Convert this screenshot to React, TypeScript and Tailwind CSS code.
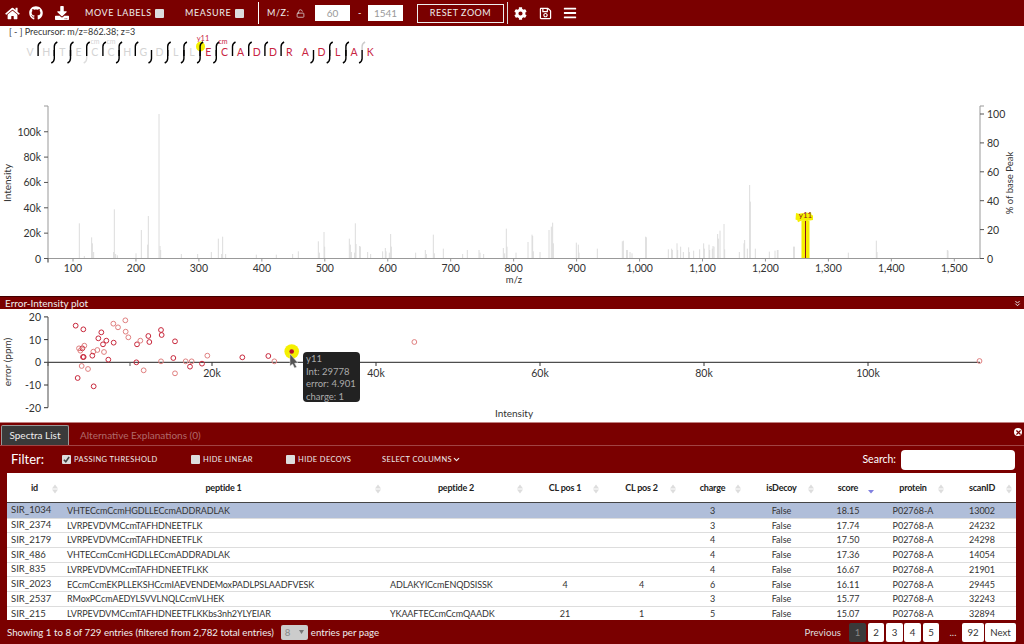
import { ChevronDown, ChevronsDown, LockOpen, X } from "lucide-react"
import { FaBars, FaCog, FaDownload, FaGithub, FaHome, FaRegSave } from "react-icons/fa"

// peak [x, top] pairs, in 1/3 px
const peaksLeft = [
  [238, 370], [253, 468], [275, 412], [277, 430], [281, 456], [341, 456], [343, 328], [347, 462], [352, 466], [408, 460],
  [424, 390], [443, 434], [445, 348], [477, 42], [480, 438], [482, 450], [544, 462], [593, 462], [634, 456], [655, 416],
  [665, 462], [668, 410], [677, 462], [769, 464], [829, 464], [878, 462], [895, 454], [955, 424], [958, 458], [972, 396],
  [974, 440], [1048, 416], [1051, 434], [1054, 456], [1064, 458], [1066, 370], [1068, 432], [1079, 438], [1081, 440],
  [1103, 456], [1112, 462], [1148, 454], [1156, 444], [1158, 454], [1168, 458], [1172, 402], [1174, 440], [1247, 458],
  [1276, 450], [1279, 462], [1300, 404], [1303, 460], [1330, 446], [1388, 462], [1402, 450], [1437, 450], [1440, 458],
  [1451, 462], [1510, 444], [1514, 460], [1519, 386], [1521, 440],
]

const peaksRight = [
  [12, 458], [48, 426], [60, 404], [62, 408], [64, 454], [84, 456], [111, 390], [118, 380], [122, 368], [124, 430],
  [193, 428], [199, 434], [201, 458], [256, 446], [331, 424], [334, 422], [344, 450], [346, 450], [354, 456], [360, 460],
  [401, 410], [403, 412], [469, 448], [479, 446], [481, 450], [495, 430], [497, 450], [506, 440], [514, 456], [530, 442],
  [532, 456], [545, 452], [563, 448], [575, 430], [577, 446], [591, 434], [593, 450], [601, 446], [603, 438], [606, 440],
  [617, 402], [619, 416], [624, 392], [636, 372], [638, 448], [682, 456], [696, 430], [698, 420], [706, 446], [713, 255],
  [715, 305], [730, 446], [772, 455], [789, 452], [796, 450], [798, 450], [845, 440], [847, 440], [1009, 458], [1093, 422],
  [1095, 456], [1306, 450], [1308, 452],
]

const peaks = [
  ...peaksLeft.map(([x, top]) => [x / 3, 100 + top / 3]),
  ...peaksRight.map(([x, top]) => [512 + x / 3, 100 + top / 3]),
]

const mzTicks = [100, 200, 300, 400, 500, 600, 700, 800, 900, 1000, 1100, 1200, 1300, 1400, 1500]
const intensityTicks = [0, 20, 40, 60, 80, 100]

const sequence = "VHTECCHGDLLECADDRADLAK".split("")
type Frag = "top" | "bottom" | "both" | "none" | "lightBottom" | "lightTop"
const fragments: Frag[] = [
  "top", "both", "both", "lightBottom", "top", "both", "top", "bottom", "both", "both", "both",
  "both", "top", "top", "top", "top", "none", "bottom", "both", "both", "lightTop",
]

// scatter [x, y, faded]
const errorPoints: [number, number, boolean][] = [
  [227, 107, false], [250, 118, false], [237, 175, true], [247, 175, false], [241, 182, true], [253, 167, true],
  [249, 201, false], [251, 201, false], [280, 185, true], [277, 197, false], [292, 180, true], [295, 145, false],
  [304, 127, false], [319, 152, false], [309, 163, false], [312, 186, true], [340, 101, true], [354, 112, true],
  [376, 91, true], [377, 125, true], [385, 142, true], [341, 158, false], [325, 209, false], [411, 163, false],
  [421, 152, true], [445, 138, false], [448, 156, false], [483, 120, false], [485, 135, false], [525, 154, false],
  [409, 217, false], [483, 214, true], [520, 204, false], [557, 214, true], [575, 214, true], [606, 221, false],
  [622, 197, true], [727, 202, false], [805, 198, false], [823, 214, true], [1243, 156, true], [245, 228, true],
  [264, 237, true], [233, 264, false], [281, 289, false], [431, 241, true], [525, 250, true], [570, 230, false],
]

const rows = [
  ["SIR_1034", "VHTECcmCcmHGDLLECcmADDRADLAK", "", "", "", "3", "False", "18.15", "P02768-A", "13002"],
  ["SIR_2374", "LVRPEVDVMCcmTAFHDNEETFLK", "", "", "", "3", "False", "17.74", "P02768-A", "24232"],
  ["SIR_2179", "LVRPEVDVMCcmTAFHDNEETFLK", "", "", "", "4", "False", "17.50", "P02768-A", "24298"],
  ["SIR_486", "VHTECcmCcmHGDLLECcmADDRADLAK", "", "", "", "4", "False", "17.36", "P02768-A", "14054"],
  ["SIR_835", "LVRPEVDVMCcmTAFHDNEETFLKK", "", "", "", "4", "False", "16.67", "P02768-A", "21901"],
  ["SIR_2023", "ECcmCcmEKPLLEKSHCcmIAEVENDEMoxPADLPSLAADFVESK", "ADLAKYICcmENQDSISSK", "4", "4", "6", "False", "16.11", "P02768-A", "29445"],
  ["SIR_2537", "RMoxPCcmAEDYLSVVLNQLCcmVLHEK", "", "", "", "3", "False", "15.77", "P02768-A", "32243"],
  ["SIR_215", "LVRPEVDVMCcmTAFHDNEETFLKKbs3nh2YLYEIAR", "YKAAFTECcmCcmQAADK", "21", "1", "5", "False", "15.07", "P02768-A", "32894"],
]

const columns = ["id", "peptide 1", "peptide 2", "CL pos 1", "CL pos 2", "charge", "isDecoy", "score", "protein", "scanID"]
const gridColumns = "grid grid-cols-[55px_323px_142px_76px_77px_65px_73px_60px_70px_68px]"

function CheckBox({ checked = false }: { checked?: boolean }) {
  return (
    <span className="flex h-[9px] w-[9px] shrink-0 items-center justify-center rounded-[1px] bg-[#ddd]">
      {checked && (
        <svg width="7" height="7" viewBox="0 0 8 8" fill="none" stroke="#444" strokeWidth="1.8">
          <path d="M1 4.2 3.2 6.5 7 1.2" />
        </svg>
      )}
    </span>
  )
}

function SortIcon({ active }: { active: boolean }) {
  return (
    <svg className="absolute right-1 top-[11px]" width="6" height="10" viewBox="0 0 6 10">
      {active ? (
        <path d="M0 6h6L3 9.5z" fill="#8080e0" />
      ) : (
        <path d="M3 .5 6 4.5H0zM3 9.5 0 5.5h6z" fill="#ddd" />
      )}
    </svg>
  )
}

function Fragment({ x, kind }: { x: number; kind: Frag }) {
  const top = `M${x + 3} 42 Q${x} 43.5 ${x} 46.500 L${x} 56`
  const bottom = `M${x} 50 L${x} 58.500 Q${x} 61.500 ${x - 3} 63`
  return (
    <g fill="none" stroke="#000" strokeWidth="1.4">
      {(kind === "top" || kind === "both") && <path d={top} />}
      {(kind === "bottom" || kind === "both") && <path d={bottom} />}
      {kind === "lightBottom" && (
        <>
          <path d={top} />
          <path d={`M${x} 56 L${x} 58.500 Q${x} 61.500 ${x - 3} 63`} stroke="#ddd" />
        </>
      )}
      {kind === "lightTop" && (
        <>
          <path d={bottom} />
          <path d={`M${x + 3} 42 Q${x} 43.500 ${x} 46.500 L${x} 50`} stroke="#ccc" />
        </>
      )}
    </g>
  )
}

function SpectrumPanel() {
  const axisText = "#333"
  return (
    <svg className="block h-[270px] w-[1024px]" viewBox="0 26 1024 270" fontSize="10.5" fill={axisText}>
      <text x="9" y="35" fontSize="9">[ - ]  Precursor: m/z=862.38; z=3</text>

      <ellipse cx="200.5" cy="46.5" rx="4.5" ry="5" fill="#f5f000" />
      {sequence.map((letter, i) => (
        <text key={i} x={30 + i * 16.2} y="55.5" fontSize="10.5" textAnchor="middle" fill={i >= 11 ? "#c8253f" : "#d4d4d4"}>
          {letter}
        </text>
      ))}
      {fragments.map((kind, i) => kind !== "none" && <Fragment key={i} x={38.1 + i * 16.2} kind={kind} />)}
      <text x="95" y="44" fontSize="7" textAnchor="middle" fill="#d4d4d4">cm</text>
      <text x="111" y="44" fontSize="7" textAnchor="middle" fill="#d4d4d4">cm</text>
      <text x="223" y="44" fontSize="7" textAnchor="middle" fill="#c8253f">cm</text>
      <text x="203" y="41" fontSize="7.5" textAnchor="middle" fill="#c8253f">y11</text>

      {peaks.map(([x, top], i) => (
        <line key={i} x1={x} x2={x} y1={top} y2="258.5" stroke="#dcdcdc" strokeWidth="1" />
      ))}

      <rect x="801.5" y="221" width="8" height="38" fill="#f5f000" />
      <line x1="805.5" x2="805.5" y1="221" y2="258.5" stroke="#8a1020" strokeWidth="1" />
      <path d="M796 213l3 .8 4-.8 2 1 2-1.800 1 1 3-1 .5 2.600 1.500 .6V220l-3 .5-3 .5-6-.2-3 1.500-.6-2-1.900-.8z" fill="#f5f000" />
      <text x="805.5" y="218" fontSize="8" textAnchor="middle" fill="#8a1020">y11</text>

      <g stroke="#999" strokeWidth="1" fill="none">
        <path d="M48 106V258.500M44 106h4" />
        <path d="M48 258.500H980" strokeWidth="1.2" />
        <path d="M980 258.500V106M980 106h4" />
        <path d="M48 258.500v4" stroke="#333" />
      </g>
      {intensityTicks.map((tick) => {
        const y = 258.5 - (tick / 20) * 25.35
        return (
          <g key={tick}>
            <path d={`M44 ${y}h4`} stroke="#555" />
            <text x="41" y={y + 4} textAnchor="end">{tick === 0 ? "0" : `${tick}k`}</text>
          </g>
        )
      })}
      {intensityTicks.map((tick) => {
        const y = 258.5 - (tick / 20) * 28.9
        return (
          <g key={tick}>
            <path d={`M980 ${y}h4`} stroke="#555" />
            <text x="987" y={y + 4}>{tick}</text>
          </g>
        )
      })}
      {mzTicks.map((tick) => {
        const x = 73 + ((tick - 100) / 100) * 62.95
        return (
          <g key={tick}>
            <path d={`M${x} 258.500v3`} stroke="#999" />
            <text x={x} y="272" textAnchor="middle">{tick.toLocaleString("en-US")}</text>
          </g>
        )
      })}
      <text x="514" y="283" textAnchor="middle" fontSize="9.5">m/z</text>
      <text transform="translate(11 183) rotate(-90)" textAnchor="middle" fontSize="10">Intensity</text>
      <text transform="translate(1013 183) rotate(-90)" textAnchor="middle" fontSize="9.5">% of base Peak</text>
    </svg>
  )
}

function ErrorPlot() {
  return (
    <section className="relative h-[113px] w-full">
      <svg className="block h-[113px] w-[1024px]" viewBox="0 309 1024 113" fontSize="10.5" fill="#333">
        <path d="M48 317V407.500" stroke="#888" strokeWidth="1.5" />
        {[20, 10, 0, -10, -20].map((tick) => {
          const y = 362.3 - tick * 2.27
          return (
            <g key={tick}>
              <path d={`M44 ${y}h4`} stroke="#333" />
              <text x="41" y={y + 4} textAnchor="end">{tick}</text>
            </g>
          )
        })}
        <path d="M48 362.300H980" stroke="#222" strokeWidth="1" />
        <path d="M48 362v4M130 362v4" stroke="#555" />
        {[20, 40, 60, 80, 100].map((tick) => {
          const x = 212 + ((tick - 20) / 20) * 164
          return (
            <g key={tick}>
              <path d={`M${x} 362v4`} stroke="#333" />
              <text x={x} y="377" textAnchor="middle">{tick}k</text>
            </g>
          )
        })}
        {errorPoints.map(([x, y, faded], i) => (
          <circle
            key={i}
            cx={x / 3}
            cy={290 + y / 3}
            r="2.4"
            fill="none"
            stroke={faded ? "#e07f7f" : "#c8283c"}
            strokeWidth="1"
          />
        ))}
        <circle cx="979.5" cy="361" r="2.4" fill="none" stroke="#e07f7f" strokeWidth="1" />
        <circle cx="291.7" cy="351.5" r="7.3" fill="#f5f000" />
        <circle cx="291.7" cy="351.5" r="2.3" fill="#b8102c" />
        <path d="M290 354l0 12 2.600-2 2 4 2-1-2-3.800 3.200-.4z" fill="#555" stroke="#ddd" strokeWidth=".5" />
        <text x="514" y="417" textAnchor="middle" fontSize="10">Intensity</text>
        <text transform="translate(11 362) rotate(-90)" textAnchor="middle" fontSize="10">error (ppm)</text>
      </svg>
      <div className="absolute left-[303px] top-[43px] h-[50px] w-[57px] whitespace-nowrap rounded-[4px] bg-[#222] px-[3px] pt-[1px] text-[9.5px] leading-[12.6px] text-[#aaa]">
        <div>y11</div>
        <div>Int: 29778</div>
        <div>error: 4.901</div>
        <div>charge: 1</div>
      </div>
    </section>
  )
}

function Toolbar() {
  return (
    <header className="flex h-[26px] shrink-0 items-center bg-[#7a0000] text-[9px] tracking-[0.6px] text-[#eee]">
      <FaHome className="ml-[5px] h-[13px] w-[15px] text-white" />
      <FaGithub className="ml-[9px] h-[14px] w-[14px] text-white" />
      <FaDownload className="ml-[12px] h-[14px] w-[14px] text-white" />
      <span className="ml-[16px] w-[67px] whitespace-nowrap">MOVE LABELS</span>
      <span className="ml-[3px]"><CheckBox /></span>
      <span className="ml-[21px] w-[47px] whitespace-nowrap">MEASURE</span>
      <span className="ml-[3px]"><CheckBox /></span>
      <span className="ml-[14px] h-[22px] w-px bg-white" />
      <span className="ml-[8px] w-[19px] whitespace-nowrap">M/Z:</span>
      <LockOpen className="ml-[10px] h-[9px] w-[9px] text-[#ddd]" />
      <span className="ml-[10px] flex h-[16px] w-[35px] items-center justify-center bg-white text-[10px] tracking-normal text-[#999]">60</span>
      <span className="ml-[8px] w-[5px] text-white">-</span>
      <span className="ml-[5px] flex h-[16px] w-[35px] items-center justify-center bg-white text-[10px] tracking-normal text-[#999]">1541</span>
      <span className="ml-[14px] flex h-[19px] w-[87px] items-center justify-center border border-[#eee] text-[9px] tracking-[0.5px]">RESET ZOOM</span>
      <span className="ml-[3px] h-[22px] w-px bg-[#ddd]" />
      <FaCog className="ml-[6px] h-[13px] w-[13px] text-white" />
      <FaRegSave className="ml-[12px] h-[13px] w-[13px] text-white" />
      <FaBars className="ml-[11px] h-[14px] w-[14px] text-white" />
    </header>
  )
}

function SpectraTable() {
  return (
    <div className="mx-[7px] h-[147px] w-[1009px] shrink-0 overflow-hidden bg-white text-[9px] text-[#333]">
      <div className={`${gridColumns} h-[30px] items-center border-b border-[#444] text-center text-[9px] font-bold tracking-[-0.2px] text-[#222]`}>
        {columns.map((column) => (
          <div key={column} className="relative flex h-full items-center justify-center">
            {column}
            <SortIcon active={column === "score"} />
          </div>
        ))}
      </div>
      {rows.map((row, rowIndex) => (
        <div
          key={row[0]}
          className={`${gridColumns} h-[14.7px] items-center ${rowIndex === 0 ? "bg-[#b0bed9]" : "border-t border-[#ddd] bg-white"}`}
        >
          {row.map((cell, i) => (
            <div
              key={i}
              className={`overflow-hidden whitespace-nowrap ${i === 0 ? "pl-[4px] text-[9.5px]" : i < 3 ? "pl-[5px] tracking-[-0.1px]" : "text-center"}`}
            >
              {cell}
            </div>
          ))}
        </div>
      ))}
    </div>
  )
}

function Pagination() {
  const box = "flex h-[19px] items-center justify-center rounded-[2px] bg-white text-[#333]"
  return (
    <div className="ml-auto flex items-center text-[9.7px]">
      <span className="mr-[8px] text-[#ddd]">Previous</span>
      <span className="flex h-[19px] w-[17px] items-center justify-center rounded-[2px] bg-[#3a3a3a] text-[#888]">1</span>
      <span className={`${box} ml-[2px] w-[16px]`}>2</span>
      <span className={`${box} ml-[2px] w-[17px]`}>3</span>
      <span className={`${box} ml-[1px] w-[17px]`}>4</span>
      <span className={`${box} ml-[2px] w-[16px]`}>5</span>
      <span className="ml-[5px] w-[18px] text-center text-[#ddd]">...</span>
      <span className={`${box} w-[22px]`}>92</span>
      <span className={`${box} ml-[1px] w-[31px]`}>Next</span>
    </div>
  )
}

function BottomPanel() {
  return (
    <section className="flex h-[222px] flex-col bg-[#7a0000]">
      <div className="relative flex h-[24px] shrink-0 items-end border-y border-b-[#a04444] border-t-[#c08080] pl-[1px] text-[10px]">
        <span className="flex h-[20px] w-[68px] items-center justify-center rounded-t-[2px] border border-b-0 border-[#999] bg-[#3a3a3a] text-[#eee]">
          Spectra List
        </span>
        <span className="ml-[11px] flex h-[20px] items-center text-[#b06a6a]">Alternative Explanations (0)</span>
        <span className="absolute right-[2px] top-[5px] flex h-[8px] w-[8px] items-center justify-center rounded-full bg-white">
          <X className="h-[7px] w-[7px] text-[#7a0000]" strokeWidth={4} />
        </span>
      </div>
      <div className="flex h-[27px] shrink-0 items-center text-[7.5px] tracking-[0.4px] text-[#eee]">
        <span className="ml-[11px] w-[51px] text-[13px] tracking-normal text-white">Filter:</span>
        <CheckBox checked />
        <span className="ml-[3px] w-[117px] whitespace-nowrap">PASSING THRESHOLD</span>
        <CheckBox />
        <span className="ml-[3px] w-[83px] whitespace-nowrap">HIDE LINEAR</span>
        <CheckBox />
        <span className="ml-[3px] w-[84px] whitespace-nowrap">HIDE DECOYS</span>
        <span className="flex items-center whitespace-nowrap">
          SELECT COLUMNS
          <ChevronDown className="h-[9px] w-[9px]" strokeWidth={3} />
        </span>
        <span className="ml-auto text-[10.5px] tracking-normal text-white">Search:</span>
        <span className="ml-[5px] mr-[9px] h-[20px] w-[114px] rounded-[4px] bg-white" />
      </div>
      <SpectraTable />
      <div className="flex h-[24px] items-center pl-[7px] pr-[8px] text-[9.7px] text-[#eee]">
        <span>Showing 1 to 8 of 729 entries (filtered from 2,782 total entries)</span>
        <span className="ml-[7px] flex h-[15px] w-[27px] items-center justify-between rounded-[2px] bg-[#ccc] px-[4px] text-[#888]">
          8
          <svg width="5" height="4" viewBox="0 0 5 4"><path d="M0 0h5L2.500 4z" fill="#777" /></svg>
        </span>
        <span className="ml-[3px]">entries per page</span>
        <Pagination />
      </div>
    </section>
  )
}

export default function App() {
  return (
    <main className="flex h-[644px] w-[1024px] flex-col overflow-hidden bg-white font-[Lato,sans-serif]">
      <Toolbar />
      <SpectrumPanel />
      <div className="flex h-[13px] shrink-0 items-center justify-between border-t border-[#400000] bg-[#7a0000] pl-[5px] pr-[2px] text-[10px] text-[#eee]">
        Error-Intensity plot
        <ChevronsDown className="h-[9px] w-[9px]" strokeWidth={2.5} />
      </div>
      <ErrorPlot />
      <BottomPanel />
    </main>
  )
}
